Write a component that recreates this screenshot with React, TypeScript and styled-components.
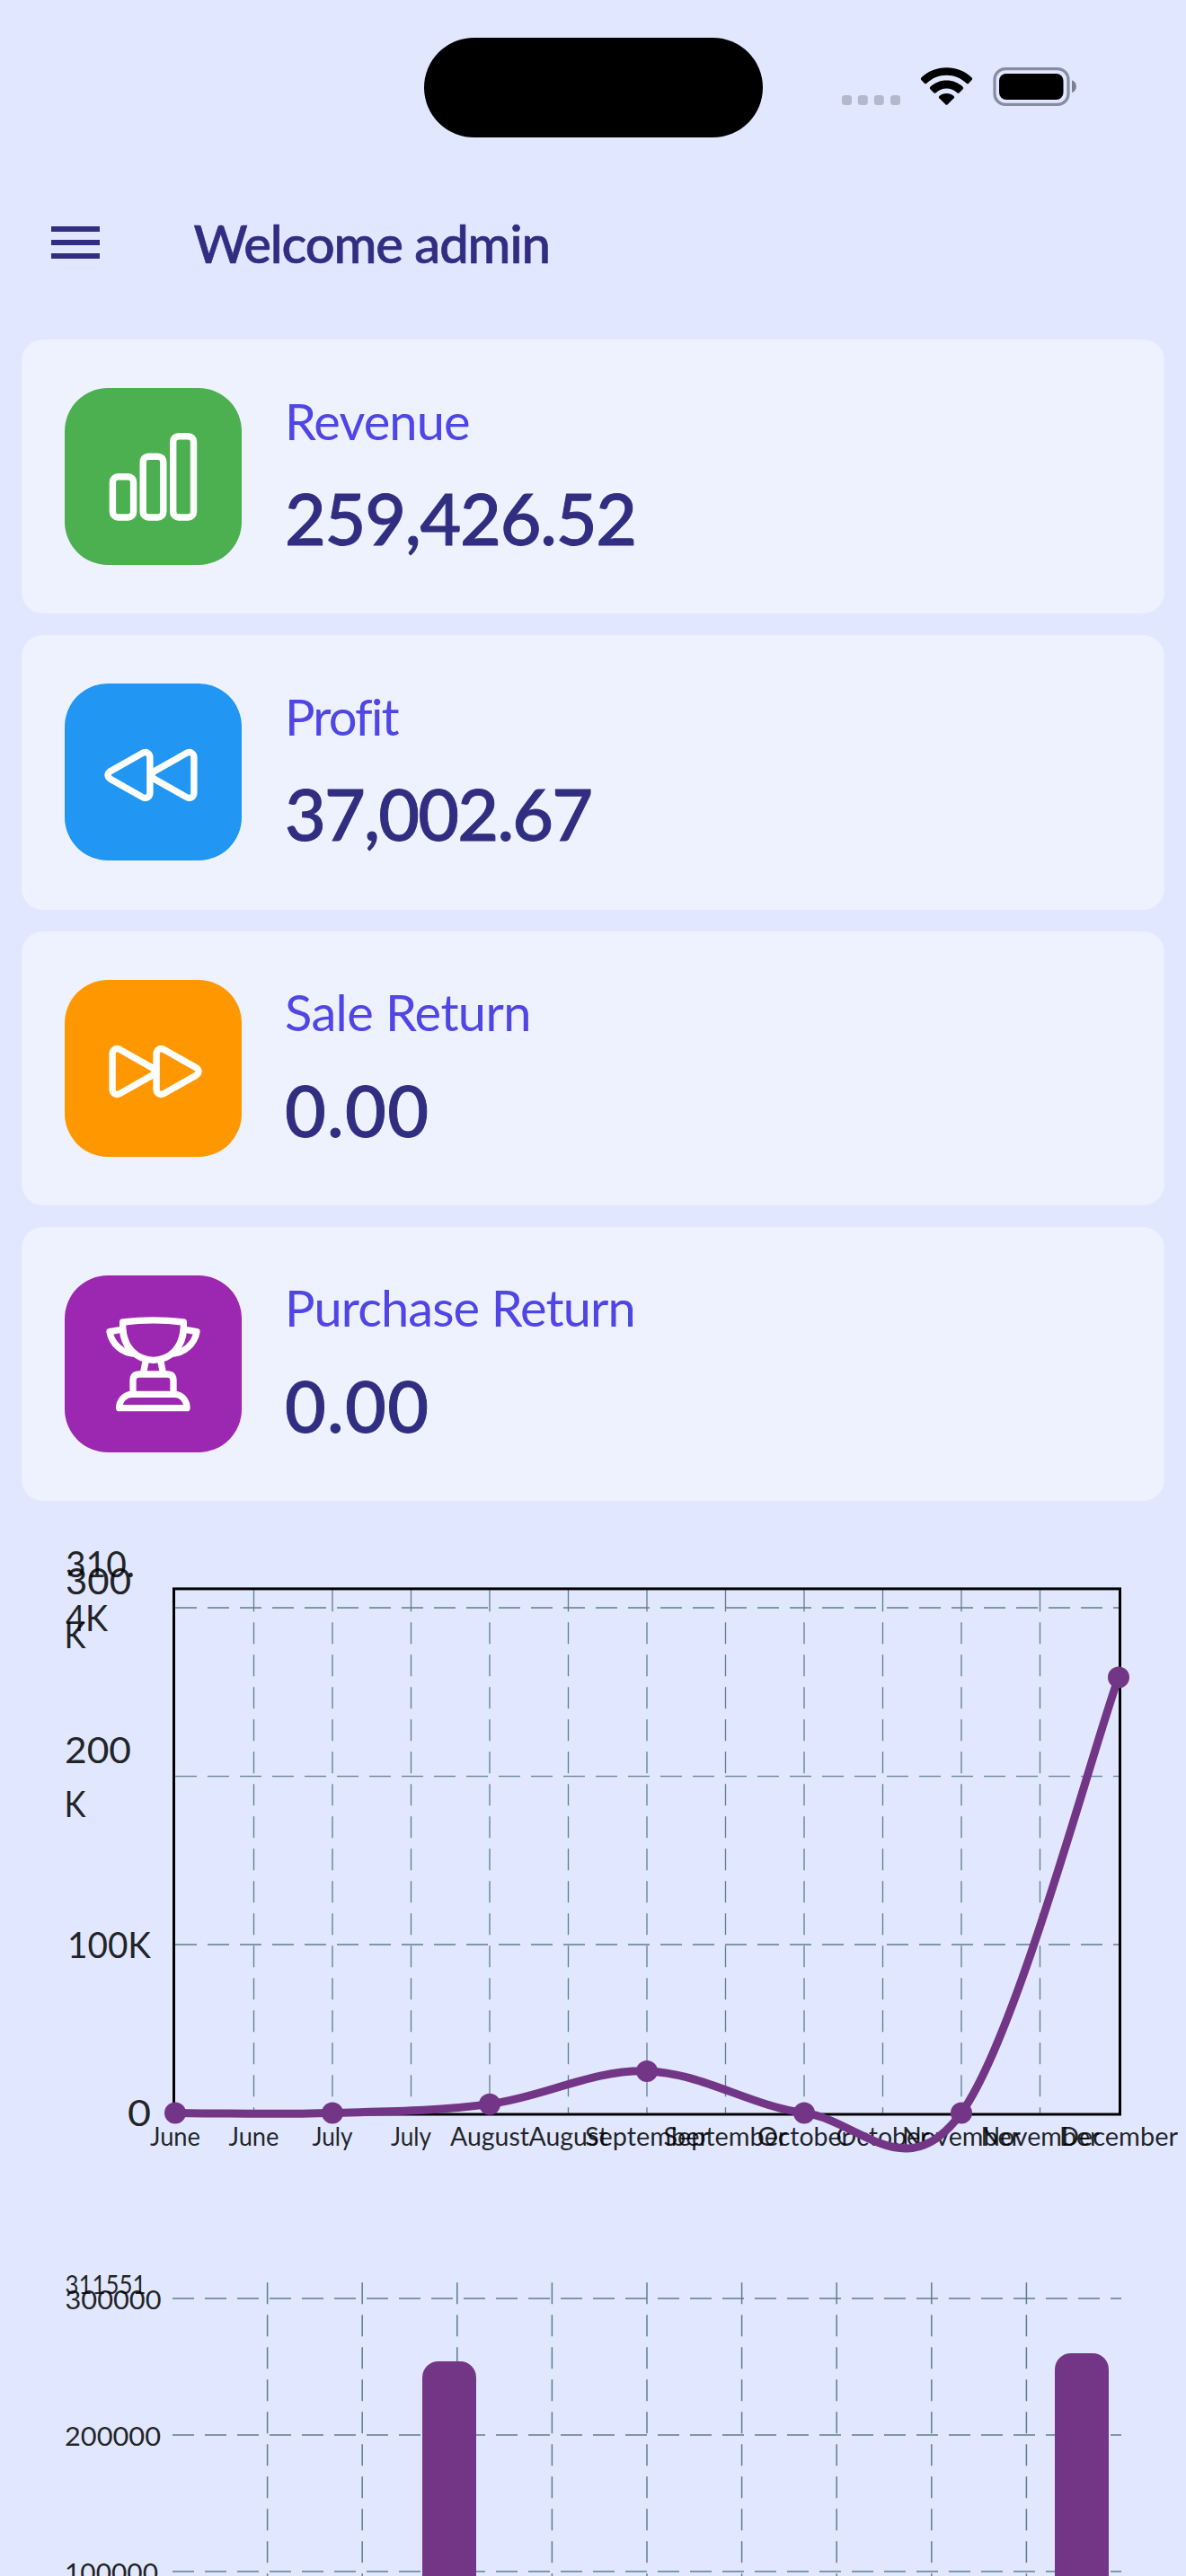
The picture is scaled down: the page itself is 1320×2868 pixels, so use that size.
import React from "react";
import styled, { createGlobalStyle } from "styled-components";

const FONT = `Lato, "Open Sans", sans-serif`;
const PURPLE = "#733585";

const GlobalStyle = createGlobalStyle`
  *, *::before, *::after { box-sizing: border-box; }
  html, body { margin: 0; padding: 0; background: #e0e7ff; }
  body { font-family: ${FONT}; overflow: hidden; }
`;

const Screen = styled.div`
  width: 1320px;
  height: 2868px;
  overflow: hidden;
  display: flex;
  flex-direction: column;
  background: #e0e7ff;
`;

const StatusBar = styled.header`
  height: 186px;
  flex: none;
  display: grid;
  grid-template-columns: 472px 377px 1fr;
  align-items: start;
  padding-top: 41.5px;
`;

const Island = styled.div`
  grid-column: 2;
  height: 111px;
  border-radius: 56px;
  background: #000;
`;

const StatusIcons = styled.svg`
  display: block;
  width: 300px;
  height: 60px;
  margin: 26.5px 0 0 76px;
`;

const AppBar = styled.nav`
  height: 168px;
  flex: none;
  display: flex;
  align-items: center;
  padding: 0 0 0 57px;
`;

const MenuButton = styled.button`
  width: 54px;
  height: 36px;
  padding: 0;
  border: 0;
  background: none;
  display: flex;
  flex-direction: column;
  justify-content: space-between;
`;

const MenuLine = styled.span`
  height: 6px;
  width: 100%;
  background: #312e81;
`;

const Title = styled.h1`
  margin: 0 0 0 104.5px;
  padding-top: 2px;
  font-size: 58px;
  line-height: 80px;
  font-weight: 500;
  -webkit-text-stroke: 0.7px #312e81;
  letter-spacing: -1.15px;
  white-space: nowrap;
  color: #312e81;
`;

const CardList = styled.section`
  flex: none;
  padding: 24px 24px 0;
  display: flex;
  flex-direction: column;
  gap: 24px;
`;

const Card = styled.article`
  height: 305.33px;
  border-radius: 24px;
  background: #eef2ff;
  padding: 0 48px;
  display: flex;
  gap: 48px;
`;

const Tile = styled.div<{ $color: string }>`
  width: 197px;
  height: 197px;
  margin-top: 54px;
  flex: none;
  border-radius: 48px;
  background: ${(p) => p.$color};
`;

const Glyph = styled.svg`
  display: block;
  width: 197px;
  height: 197px;
  fill: none;
  stroke: #fff;
  stroke-width: 7.4;
  stroke-linejoin: round;
  stroke-linecap: round;
`;

const Info = styled.div`
  display: flex;
  flex-direction: column;
  gap: 13.5px;
  padding-top: 50.5px;
`;

const Label = styled.div<{ $track: number }>`
  font-size: 56px;
  line-height: 80px;
  letter-spacing: ${(p) => p.$track}px;
  white-space: nowrap;
  color: #4f46e5;
`;

const Value = styled.div<{ $track: number }>`
  font-size: 79px;
  line-height: 110px;
  font-weight: 500;
  -webkit-text-stroke: 1px #312e81;
  letter-spacing: ${(p) => p.$track}px;
  white-space: nowrap;
  color: #312e81;
`;

const Charts = styled.section`
  flex: none;
  display: flex;
  flex-direction: column;
`;

const Chart = styled.svg`
  display: block;
  width: 1320px;
  flex: none;
  font-family: ${FONT};
`;

const BarsIcon = () => (
  <Glyph viewBox="0 0 197 197">
    <rect x="53.4" y="98.7" width="23.2" height="45.3" rx="6" />
    <rect x="87.2" y="76.2" width="22.6" height="67.8" rx="6" />
    <rect x="120.7" y="53.7" width="22.8" height="90.3" rx="6" />
  </Glyph>
);

const Arrows = () => (
  <>
    <path d="M86.3 77.6 L51.6 97.2 Q44.4 102 51.6 106.8 L86.3 126.4 C91 129 94.9 126 94.9 121.5 V82.5 C94.9 78 91 75 86.3 77.6 Z" />
    <path d="M135.3 77.6 L100.6 97.2 Q93.4 102 100.6 106.8 L135.3 126.4 C140 129 143.9 126 143.9 121.5 V82.5 C143.9 78 140 75 135.3 77.6 Z" />
  </>
);

const RewindIcon = () => (
  <Glyph viewBox="0 0 197 197">
    <Arrows />
  </Glyph>
);

const ForwardIcon = () => (
  <Glyph viewBox="0 0 197 197">
    <g transform="translate(197 0) scale(-1 1)">
      <Arrows />
    </g>
  </Glyph>
);

const TrophyIcon = () => (
  <Glyph viewBox="0 0 197 197">
    <g transform="scale(0.33333) translate(0 -7)" strokeWidth="22">
      <path d="M194 163 Q296 150 397 163 V185 C397 245 350 290 296 290 C242 290 194 245 194 185 Z" />
      <path d="M194 187 L150 195 C158 240 195 266 232 269 C210 250 198 225 194 187" />
      <path d="M397 187 L441 195 C433 240 396 266 359 269 C381 250 393 225 397 187" />
      <path d="M270 296 L263 330 M321 296 L328 330" />
      <path d="M228 403 V358 Q228 337 249 337 H342 Q363 337 363 358 V403" />
      <path d="M182 450 C182 425 200 404 225 404 H366 C391 404 408 425 408 450 Z" />
    </g>
  </Glyph>
);

const stats = [
  { label: "Revenue", value: "259,426.52", color: "#4caf50", Icon: BarsIcon, lt: -0.9, vt: -1.25 },
  { label: "Profit", value: "37,002.67", color: "#2196f3", Icon: RewindIcon, lt: -1.8, vt: -1.8 },
  { label: "Sale Return", value: "0.00", color: "#ff9800", Icon: ForwardIcon, lt: -0.6, vt: 1.3 },
  { label: "Purchase Return", value: "0.00", color: "#9c27b0", Icon: TrophyIcon, lt: -0.9, vt: 1.3 },
];

type Txt = { t: string; x: number; y: number; w: number; s: number };

const AxisText = ({ t, x, y, w, s }: Txt) => (
  <text
    x={x}
    y={y}
    fontSize={s}
    textLength={w}
    lengthAdjust="spacingAndGlyphs"
    fill="#000"
    fillOpacity={0.87}
  >
    {t}
  </text>
);

const lineAxis: Txt[] = [
  { t: "310.", x: 73, y: 1755.7, w: 77, s: 41 },
  { t: "4K", x: 73, y: 1815.7, w: 47, s: 41 },
  { t: "300", x: 73, y: 1774.7, w: 73, s: 41 },
  { t: "K", x: 71.5, y: 1834.7, w: 24, s: 41 },
  { t: "200", x: 72, y: 1962.7, w: 74, s: 41 },
  { t: "K", x: 71.5, y: 2022.7, w: 24, s: 41 },
  { t: "100K", x: 75, y: 2179.7, w: 93, s: 41 },
  { t: "0", x: 142, y: 2367.3, w: 26, s: 41 },
];

const monthWidths: [string, number][] = [
  ["June", 56],
  ["July", 45],
  ["August", 88],
  ["September", 138],
  ["October", 104],
  ["November", 132],
  ["December", 132],
];

const ticks = Array.from({ length: 13 }, (_, k) => {
  const [name, w] = monthWidths[Math.floor(k / 2)];
  return { name, w, x: 195 + 87.5 * k };
});

const points = [0, 0, 5200, 24800, 0, 0, 258600].map((v, i) => ({
  x: 195 + 175 * i,
  y: 2352.4 - v * 0.001875,
}));

// Smoothed line: each control point follows the slope of its neighbours.
const curve = (() => {
  let d = `M${points[0].x} ${points[0].y}`;
  let tx = 0;
  let ty = 0;
  for (let i = 1; i < points.length; i++) {
    const prev = points[i - 1];
    const cur = points[i];
    const next = points[i + 1] ?? cur;
    const c1 = [prev.x + tx, prev.y + ty];
    tx = ((next.x - prev.x) / 2) * 0.35;
    ty = ((next.y - prev.y) / 2) * 0.35;
    d += ` C${c1[0]} ${c1[1]} ${cur.x - tx} ${cur.y - ty} ${cur.x} ${cur.y}`;
  }
  return d;
})();

const LineChart = () => (
  <Chart viewBox="0 1671 1320 829" height="829">
    <g stroke="#607d8b" strokeWidth="1.3" strokeDasharray="24 12">
      {[1790, 1977.6, 2165].map((y) => (
        <line key={y} x1="195" x2="1245" y1={y} y2={y} />
      ))}
      {ticks.slice(1, 12).map((m) => (
        <line key={m.x} x1={m.x} x2={m.x} y1="1770.3" y2="2352.4" />
      ))}
    </g>
    <rect x="193.5" y="1768.9" width="1053" height="585.1" fill="none" stroke="#000" strokeWidth="3" />
    {lineAxis.map((a) => (
      <AxisText key={a.t + a.y} {...a} />
    ))}
    {ticks.map((m) => (
      <AxisText key={m.x} t={m.name} x={m.x - m.w / 2} y={2388.7} w={m.w} s={29} />
    ))}
    <path d={curve} fill="none" stroke={PURPLE} strokeWidth="9" />
    {points.map((p) => (
      <circle key={p.x} cx={p.x} cy={p.y} r="12" fill={PURPLE} />
    ))}
  </Chart>
);

const barAxis: Txt[] = [
  { t: "311551", x: 72.5, y: 2553.7, w: 90, s: 29 },
  { t: "300000", x: 72.5, y: 2570.7, w: 107, s: 29 },
  { t: "200000", x: 72, y: 2722.7, w: 107, s: 29 },
  { t: "100000", x: 72, y: 2874.7, w: 104, s: 29 },
];

const bars = [
  { x: 470, y: 2629 },
  { x: 1174, y: 2620 },
];

const BarChart = () => (
  <Chart viewBox="0 2500 1320 368" height="368">
    {barAxis.map((a) => (
      <AxisText key={a.t} {...a} />
    ))}
    <g stroke="#607d8b" strokeWidth="1.5" strokeDasharray="24 12">
      {[2559, 2711, 2863].map((y) => (
        <line key={y} x1="192" x2="1248" y1={y} y2={y} />
      ))}
      {Array.from({ length: 9 }, (_, k) => 297.6 + 105.6 * k).map((x) => (
        <line key={x} x1={x} x2={x} y1="2541.2" y2="2900" />
      ))}
    </g>
    {bars.map((b) => (
      <rect key={b.x} x={b.x} y={b.y} width="60" height="400" rx="18" fill={PURPLE} />
    ))}
  </Chart>
);

export default function App() {
  return (
    <Screen>
      <GlobalStyle />
      <StatusBar>
        <Island />
        <StatusIcons viewBox="925 68 300 60">
          {[937, 954.8, 972.8, 991].map((x) => (
            <rect key={x} x={x} y="106" width="11" height="11" rx="3.5" fill="#b3b8cc" />
          ))}
          <g transform="translate(1053.5 0)">
            <path d="M0 75.3 C11 75.3 21 79.5 28.2 86.6 Q29.2 87.8 28.2 89 L24.6 92.8 Q23.4 93.8 22.2 92.8 C16 87 8.4 83.8 0 83.8 C-8.4 83.8 -16 87 -22.2 92.8 Q-23.4 93.8 -24.6 92.8 L-28.2 89 Q-29.2 87.8 -28.2 86.6 C-21 79.5 -11 75.3 0 75.3 Z" />
            <path d="M0 89.6 C7 89.6 13.4 92.3 18.2 96.8 Q19.3 98 18.2 99.2 L14.2 103.2 Q13 104.2 11.8 103.2 C8.5 100.2 4.5 98.5 0 98.5 C-4.5 98.5 -8.5 100.2 -11.8 103.2 Q-13 104.2 -14.2 103.2 L-18.2 99.2 Q-19.3 98 -18.2 96.8 C-13.4 92.3 -7 89.6 0 89.6 Z" />
            <path d="M0 103.9 C3.2 103.9 6 105 8.2 106.9 Q9.3 108 8.2 109.2 L1.2 116.3 Q0 117.4 -1.2 116.3 L-8.2 109.2 Q-9.3 108 -8.2 106.9 C-6 105 -3.2 103.9 0 103.9 Z" />
          </g>
          <rect x="1107" y="76.6" width="82" height="39.8" rx="12" fill="none" stroke="#878c9e" strokeWidth="3.2" />
          <rect x="1112" y="82" width="71.5" height="29" rx="8" />
          <path d="M1193 89.3 C1199.5 91.5 1199.5 101 1193 103.3 Z" fill="#7b8092" />
        </StatusIcons>
      </StatusBar>
      <AppBar>
        <MenuButton aria-label="Menu">
          <MenuLine />
          <MenuLine />
          <MenuLine />
        </MenuButton>
        <Title>Welcome admin</Title>
      </AppBar>
      <CardList>
        {stats.map(({ label, value, color, Icon, lt, vt }) => (
          <Card key={label}>
            <Tile $color={color}>
              <Icon />
            </Tile>
            <Info>
              <Label $track={lt}>{label}</Label>
              <Value $track={vt}>{value}</Value>
            </Info>
          </Card>
        ))}
      </CardList>
      <Charts>
        <LineChart />
        <BarChart />
      </Charts>
    </Screen>
  );
}
